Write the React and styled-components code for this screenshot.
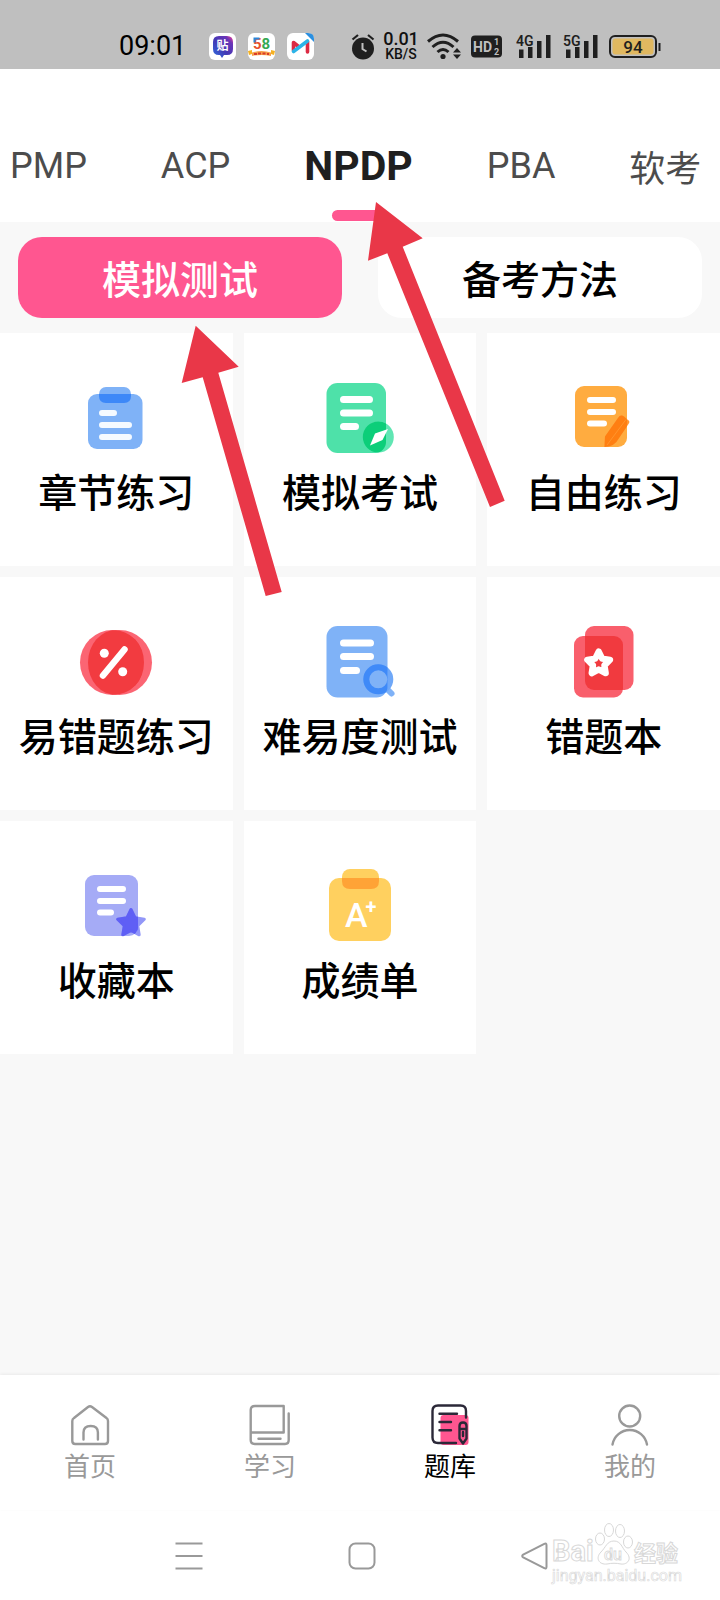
import React, { useState } from 'react';
import styled, { createGlobalStyle } from 'styled-components';

const COLORS = {
  main: '#ff5690',
  back: '#f8f8f8',
  white: '#ffffff',
  status: '#bfbfbf',
  ink: '#1f1f1f',
  font: '#4c4c4c',
  gray: '#999999',
  arrow: '#e93748',
};

const SUBJECTS = ['PMP', 'ACP', 'NPDP', 'PBA', '软考'];
const MODES = ['模拟测试', '备考方法'];

const App = () => {
  const [subject, setSubject] = useState('NPDP');
  const [mode, setMode] = useState('模拟测试');
  const [page, setPage] = useState('题库');

  return (
    <Container>
      <GlobalStyle />
      <StatusBar />
      <SubjectNav>
        {SUBJECTS.map((name) => (
          <SubjectTab key={name} $active={name === subject} onClick={() => setSubject(name)}>
            {name}
          </SubjectTab>
        ))}
      </SubjectNav>
      <Main>
        <ModeRow>
          {MODES.map((name) => (
            <ModeBtn key={name} $active={name === mode} onClick={() => setMode(name)}>
              {name}
            </ModeBtn>
          ))}
        </ModeRow>
        <MenuGrid>
          {MENUS.map(({ name, icon }) => (
            <MenuBtn key={name}>
              <MenuIcon viewBox="0 0 76 76" aria-hidden="true">
                {icon}
              </MenuIcon>
              <MenuName>{name}</MenuName>
            </MenuBtn>
          ))}
        </MenuGrid>
      </Main>
      <TabBar>
        {PAGES.map(({ name, icon }) => (
          <TabBtn key={name} $active={name === page} onClick={() => setPage(name)}>
            <TabIcon viewBox="0 0 42 42" aria-hidden="true">
              {icon}
            </TabIcon>
            {name}
          </TabBtn>
        ))}
      </TabBar>
      <SystemNav>
        <SystemBtn aria-label="菜单">
          <SystemIcon viewBox="0 0 28 28">
            <path d="M0.5 1.5h27M0.5 14h27M0.5 26.5h27" />
          </SystemIcon>
        </SystemBtn>
        <SystemBtn aria-label="主屏幕">
          <SystemIcon viewBox="0 0 28 28">
            <rect x="1.5" y="1.5" width="25" height="25" rx="6" />
          </SystemIcon>
        </SystemBtn>
        <SystemBtn aria-label="返回">
          <SystemIcon viewBox="0 0 28 28">
            <path d="M25.5 3.2v21.6q0 2.4-2.2 1.3L2.2 15.4q-2-1.4 0-2.8L23.3 1.9q2.2-1.1 2.2 1.3z" />
          </SystemIcon>
        </SystemBtn>
        <Watermark />
      </SystemNav>
      <Arrow $left={181} $top={325} width="102" height="272" viewBox="181 325 102 272">
        <path d="M195.7 325.7L238.7 366.7L218.3 372.7L281.7 592L265.7 596L202.7 377.3L181.7 383Z" />
      </Arrow>
      <Arrow $left={367} $top={201} width="139" height="307" viewBox="367 201 139 307">
        <path d="M376 202L422.7 238.3L402.7 246.7L504.7 500.7L490 507L387.3 253.3L368 260.7Z" />
      </Arrow>
    </Container>
  );
};
export default App;

const StatusBar = () => (
  <StatusRow>
    <Time>09:01</Time>
    <AppIcons>
      <svg width="27" height="27" viewBox="0 0 27 27">
        <defs>
          <linearGradient id="tie" x1="0" y1="1" x2="1" y2="0">
            <stop offset="0" stopColor="#2f6fe0" />
            <stop offset="0.45" stopColor="#4338b4" />
            <stop offset="0.8" stopColor="#6a35b8" />
            <stop offset="1" stopColor="#ff3f8e" />
          </linearGradient>
        </defs>
        <rect width="27" height="27" rx="6" fill="#fff" />
        <path d="M10 3h8q6 0 6 6v7q0 6-6 6h-3l-2 3l-2-3h-1q-6 0-6-6V9q0-6 6-6z" fill="url(#tie)" />
        <text x="13.5" y="17" fontSize="12" fontWeight="700" textAnchor="middle" fill="#fff">贴</text>
      </svg>
      <svg width="27" height="27" viewBox="0 0 27 27">
        <rect width="27" height="27" rx="6" fill="#fff" />
        <text x="5" y="16" fontSize="15" fontWeight="700" fill="#e8512c">
          5<tspan fill="#35a853">8</tspan>
        </text>
        <path d="M6.500 9.500V5.500h5" fill="none" stroke="#2b86d9" strokeWidth="2" />
        <path d="M0 18l4-1v4l-3 1zM27 18l-4-1v4l3 1z" fill="#f4b223" />
        <path d="M4 19.5q9.500-3 19 0v3.500q-9.500-2-19 0z" fill="#f6a04a" />
        <path d="M6 21h3M10 20.500h3M14.500 20.500h3M19 21h2" stroke="#d93a2b" strokeWidth="2" />
      </svg>
      <svg width="27" height="27" viewBox="0 0 27 27">
        <rect width="27" height="27" rx="6" fill="#fff" />
        <path d="M6.500 17.500V9.500l5 4M20.500 8.500V19" fill="none" stroke="#dc2a43" strokeWidth="3.600" strokeLinecap="round" strokeLinejoin="round" />
        <path d="M6.500 18.500L20.500 8" stroke="#2cb4e8" strokeWidth="3.600" strokeLinecap="round" />
        <path d="M18 0h3q6 0 6 6v3z" fill="#2a8fe0" />
      </svg>
    </AppIcons>
    <StatusIcons>
      <svg width="24" height="27" viewBox="0 0 24 27">
        <circle cx="12" cy="15.500" r="11" fill={COLORS.ink} />
        <path d="M1.500 6.500L7 2M22.500 6.500L17 2" stroke={COLORS.ink} strokeWidth="2.200" />
        <path d="M11.500 10v6l4 2.500" fill="none" stroke={COLORS.status} strokeWidth="2" />
      </svg>
      <Speed>
        <SpeedNum>0.01</SpeedNum>
        <SpeedUnit>KB/S</SpeedUnit>
      </Speed>
      <svg width="35" height="27" viewBox="0 0 35 27">
        <g fill="none" stroke={COLORS.ink} strokeWidth="3">
          <path d="M1 8.500Q16 -4.500 31 8.500" />
          <path d="M5.500 14Q16 4.500 26.500 14" />
          <path d="M10.500 19Q16 14 21.500 19" />
        </g>
        <circle cx="16" cy="23.500" r="2.600" fill={COLORS.ink} />
        <path d="M26 19.500l4-4.500l4 4.500zM26 21.500l4 4.500l4-4.500z" fill={COLORS.ink} />
      </svg>
      <svg width="31" height="23" viewBox="0 0 31 23">
        <rect width="31" height="22" y="0.500" rx="4" fill={COLORS.ink} />
        <g fill={COLORS.status} fontWeight="700">
          <text x="2" y="17" fontSize="14">HD</text>
          <text x="23" y="10" fontSize="9">1</text>
          <text x="23" y="20" fontSize="9">2</text>
        </g>
      </svg>
      <Signals>
        <Signal type="4G" />
        <Signal type="5G" />
      </Signals>
      <svg width="52" height="23" viewBox="0 0 52 23">
        <rect x="1" y="1" width="46" height="21" rx="5" fill="none" stroke={COLORS.ink} strokeWidth="2" />
        <rect x="3.500" y="3.500" width="41" height="16" rx="3" fill="#e0b860" />
        <path d="M50.500 8v8" stroke={COLORS.ink} strokeWidth="2" />
        <text x="24" y="17.500" fontSize="17" fontWeight="500" textAnchor="middle" fill={COLORS.ink}>94</text>
      </svg>
    </StatusIcons>
  </StatusRow>
);

const Signal = ({ type }) => (
  <svg width="36" height="25" viewBox="0 0 36 25">
    <text x="0" y="12" fontSize="14" fontWeight="600" fill={COLORS.ink}>{type}</text>
    <path d="M3 15.500h4.500V24H3zM12 13h4.500V24H12zM21 7h4.500V24H21zM30 1h4.500V24H30z" fill={COLORS.ink} />
  </svg>
);

const Watermark = () => (
  <WatermarkBox viewBox="0 0 132 66" aria-label="百度经验">
    <g fill="#fff" stroke="#d8d8d8" strokeWidth="1">
      <text x="2" y="40" fontSize="29" fontWeight="700">Bai</text>
      <ellipse cx="50" cy="18" rx="4.500" ry="6" />
      <ellipse cx="59" cy="9" rx="4.500" ry="6.500" />
      <ellipse cx="70" cy="10" rx="4.500" ry="6.500" />
      <ellipse cx="78" cy="21" rx="4.500" ry="6" />
      <path d="M64 20c7 0 8 7 12 11c7 7 1 13-5 12c-5-1-9-1-14 0c-8 1-12-6-6-12c5-5 6-11 13-11z" />
      <text x="54" y="39" fontSize="16" fontWeight="500" strokeWidth="0.8">du</text>
      <text x="84" y="40" fontSize="22" fontWeight="700">经验</text>
      <text x="2" y="60" fontSize="16" strokeWidth="0.6">jingyan.baidu.com</text>
    </g>
  </WatermarkBox>
);

const STAR = 'M0 -14L4.100 -5.700L13.300 -4.300L6.700 2.200L8.200 11.300L0 7L-8.200 11.300L-6.700 2.200L-13.300 -4.300L-4.100 -5.700Z';

const MENUS = [
  {
    name: '章节练习',
    icon: (
      <>
        <rect x="21" y="7" width="32" height="16" rx="7" fill="#7fb2f7" />
        <rect x="10" y="14" width="54.500" height="55" rx="9" fill="#7fb2f7" />
        <path d="M21 14h32v2q0 7-7 7H28q-7 0-7-7z" fill="#3d88f8" />
        <path d="M24 33h12M24 45h27M24 57h27" stroke="#f5faff" strokeWidth="6" strokeLinecap="round" />
      </>
    ),
  },
  {
    name: '模拟考试',
    icon: (
      <>
        <clipPath id="examBody">
          <rect x="4.500" y="3" width="59.500" height="70" rx="11" />
        </clipPath>
        <rect x="4.500" y="3" width="59.500" height="70" rx="11" fill="#4ee1a9" />
        <circle cx="56.300" cy="57" r="15.500" fill="#60e6b3" />
        <circle cx="56.300" cy="57" r="15.500" fill="#0cce79" clipPath="url(#examBody)" />
        <path d="M21.500 19.500h26M21.500 33h26M21.500 46.500h12" stroke="#fff" strokeWidth="7" strokeLinecap="round" />
        <path d="M66 49L53 53.500L48 65.500L60.500 60Z" fill="#fff" />
      </>
    ),
  },
  {
    name: '自由练习',
    icon: (
      <>
        <clipPath id="freeBody">
          <rect x="9" y="6" width="52" height="61" rx="9" />
        </clipPath>
        <rect x="9" y="6" width="52" height="61" rx="9" fill="#ffac40" />
        <path d="M38.500 67L39 56.500L52 38Q54.500 34 58 36.500L62 40Q64.500 41.500 62.500 44L52 59.500Q49 66 38.500 67Z" fill="#ff9836" />
        <path d="M38.500 67L39 56.500L52 38Q54.500 34 58 36.500L62 40Q64.500 41.500 62.500 44L52 59.500Q49 66 38.500 67Z" fill="#ff7f12" clipPath="url(#freeBody)" />
        <path d="M41 65L60 39.500" stroke="#ff952c" strokeWidth="1" />
        <path d="M24 20h23M24 32h23M24 43.500h14" stroke="#fff" strokeWidth="6" strokeLinecap="round" />
      </>
    ),
  },
  {
    name: '易错题练习',
    icon: (
      <>
        <clipPath id="leftDisc">
          <circle cx="34.500" cy="38.500" r="32.500" />
        </clipPath>
        <circle cx="34.500" cy="38.500" r="32.500" fill="#fb6573" />
        <circle cx="41.500" cy="38.500" r="32.500" fill="#fb6573" />
        <ellipse cx="38" cy="38.500" rx="28" ry="32.500" fill="#f23b40" clipPath="url(#leftDisc)" />
        <path d="M46.500 25.500L25 51.500" stroke="#fff" strokeWidth="6.500" strokeLinecap="round" />
        <circle cx="26.300" cy="29.300" r="4.500" fill="#fff" />
        <circle cx="44.700" cy="47.700" r="4.500" fill="#fff" />
      </>
    ),
  },
  {
    name: '难易度测试',
    icon: (
      <>
        <clipPath id="levelBody">
          <rect x="4.500" y="2" width="61" height="71.500" rx="11" />
        </clipPath>
        <rect x="4.500" y="2" width="61" height="71.500" rx="11" fill="#7fb2f7" />
        <path d="M66 66L69.500 69.500" stroke="#7fb2f7" strokeWidth="6" strokeLinecap="round" />
        <circle cx="56.300" cy="55.300" r="12" fill="none" stroke="#6fa8f8" strokeWidth="6" />
        <circle cx="56.300" cy="55.300" r="12" fill="#7fb2f7" stroke="#3f8af8" strokeWidth="6" clipPath="url(#levelBody)" />
        <path d="M21.500 19h27M21.500 32.500h27M21.500 46.500h13" stroke="#fff" strokeWidth="7" strokeLinecap="round" />
      </>
    ),
  },
  {
    name: '错题本',
    icon: (
      <>
        <clipPath id="frontCard">
          <rect x="8" y="12" width="49" height="61.500" rx="9" />
        </clipPath>
        <rect x="19" y="2" width="48.500" height="64" rx="9" fill="#f95f6c" />
        <rect x="8" y="12" width="49" height="61.500" rx="9" fill="#f95f6c" />
        <rect x="19" y="2" width="48.500" height="64" rx="9" fill="#f13a3f" clipPath="url(#frontCard)" />
        <path d={STAR} transform="translate(32.700 39.500) scale(0.850)" fill="none" stroke="#fff" strokeWidth="7.500" strokeLinejoin="round" />
      </>
    ),
  },
  {
    name: '收藏本',
    icon: (
      <>
        <clipPath id="favBody">
          <rect x="7" y="7" width="53" height="61" rx="9" />
        </clipPath>
        <rect x="7" y="7" width="53" height="61" rx="9" fill="#a5abf6" />
        <g transform="translate(53 55.500)" strokeWidth="3" strokeLinejoin="round">
          <path d={STAR} fill="#9297f8" stroke="#9297f8" />
        </g>
        <g clipPath="url(#favBody)">
          <path d={STAR} transform="translate(53 55.500)" fill="#5f5ff5" stroke="#5f5ff5" strokeWidth="3" strokeLinejoin="round" />
        </g>
        <path d="M22 21h23M22 33h23M22 44.500h11" stroke="#fff" strokeWidth="6" strokeLinecap="round" />
      </>
    ),
  },
  {
    name: '成绩单',
    icon: (
      <>
        <rect x="20" y="1" width="37" height="20" rx="8" fill="#ffd05f" />
        <rect x="7" y="10" width="62" height="63" rx="10" fill="#ffd05f" />
        <path d="M20 10h37v3q0 8-8 8H28q-8 0-8-8z" fill="#ffa336" />
        <text x="23" y="59" fontSize="34" fontWeight="500" fill="#fff">
          A<tspan dx="-2" dy="-13" fontSize="20" fontWeight="700">+</tspan>
        </text>
      </>
    ),
  },
];

const PAGES = [
  {
    name: '首页',
    icon: (
      <>
        <path d="M3.300 17q0-2 1.700-3L19 3q2-1.500 4 0l14.500 11q1.500 1 1.500 3v20q0 3-3 3H6.300q-3 0-3-3z" />
        <path d="M14.500 35.500V28.500q0-6.500 7.200-6.500t7.200 6.500v7" />
      </>
    ),
  },
  {
    name: '学习',
    icon: (
      <>
        <path d="M34.700 28.500V2H6q-4.300 0-4.300 4v30q0 4 4 4H36q3.700 0 3.700-4V9.500M34.700 28.500H1.700" />
        <path d="M9.500 34.700H31.500" />
      </>
    ),
  },
  {
    name: '题库',
    icon: (
      <>
        <rect x="11.500" y="11" width="28" height="30" rx="3" fill={COLORS.main} stroke="none" />
        <path d="M37 13.500V7q0-5.500-5.500-5.500H9q-5.500 0-5.500 5.500v26.500q0 5.500 5.500 5.500h18" />
        <path d="M10.500 9.700H28M10.500 18H22M10.500 26.300H22" />
        <path d="M30.500 22q0-3.500 3.500-3.500t3.500 3.500v12.500L34 39.500L30.500 34.500zM30.500 25h7M34 28v4" />
      </>
    ),
  },
  {
    name: '我的',
    icon: (
      <>
        <circle cx="20.700" cy="12" r="10.500" />
        <path d="M3.500 40.500A17.500 17.500 0 0 1 38 40.500" />
      </>
    ),
  },
];

const GlobalStyle = createGlobalStyle`
  * {
    box-sizing: border-box;
  }
  body {
    margin: 0;
    font-family: Roboto, 'Noto Sans CJK SC', sans-serif;
  }
  button {
    padding: 0;
    border: none;
    background: none;
    font-family: inherit;
    cursor: pointer;
  }
  svg {
    display: block;
  }
`;

const Container = styled.div`
  position: relative;
  display: flex;
  flex-direction: column;
  min-height: 100vh;
  overflow: hidden;
  background-color: ${COLORS.white};
`;

const StatusRow = styled.header`
  display: flex;
  align-items: center;
  height: 69px;
  padding: 23px 0 0 119px;
  background-color: ${COLORS.status};
`;
const Time = styled.span`
  width: 66px;
  font-size: 27px;
  color: #000;
`;
const AppIcons = styled.div`
  display: flex;
  gap: 12px;
  margin-left: 24px;
`;
const StatusIcons = styled.div`
  display: flex;
  align-items: center;
  gap: 9px;
  margin-left: 37px;
`;
const Speed = styled.div`
  display: flex;
  flex-direction: column;
  align-items: center;
  width: 34px;
  color: #111;
`;
const SpeedNum = styled.span`
  font-size: 18px;
  line-height: 16px;
  font-weight: 500;
`;
const SpeedUnit = styled.span`
  font-size: 14px;
  line-height: 14px;
  font-weight: 500;
`;
const Signals = styled.div`
  display: flex;
  gap: 11px;
  padding: 0 1px 0 5px;
`;

const SubjectNav = styled.nav`
  display: flex;
  gap: 74px;
  padding: 67px 0 0 10px;
`;
const SubjectTab = styled.button`
  position: relative;
  flex-shrink: 0;
  height: 86px;
  padding-bottom: 26px;
  color: ${({ $active }) => ($active ? COLORS.ink : COLORS.font)};
  font-size: ${({ $active }) => ($active ? 41 : 36)}px;
  font-weight: ${({ $active }) => ($active ? 700 : 400)};

  &::after {
    content: '';
    display: ${({ $active }) => ($active ? 'block' : 'none')};
    position: absolute;
    left: calc(50% - 27px);
    bottom: 1px;
    width: 54px;
    height: 11px;
    border-radius: 6px;
    background-color: ${COLORS.main};
  }
`;

const Main = styled.main`
  flex: 1;
  background-color: ${COLORS.back};
`;
const ModeRow = styled.div`
  display: flex;
  gap: 36px;
  padding: 15px 18px;
`;
const ModeBtn = styled.button`
  flex: 1;
  height: 81px;
  padding-bottom: 2px;
  border-radius: 24px;
  background-color: ${({ $active }) => ($active ? COLORS.main : COLORS.white)};
  color: ${({ $active }) => ($active ? COLORS.white : '#000')};
  font-size: 39px;
  font-weight: 500;
`;

const MenuGrid = styled.div`
  display: grid;
  grid-template-columns: repeat(3, 1fr);
  gap: 11px;
`;
const MenuBtn = styled.button`
  display: flex;
  flex-direction: column;
  align-items: center;
  gap: 14px;
  height: 233px;
  padding-top: 47px;
  background-color: ${COLORS.white};
`;
const MenuIcon = styled.svg`
  width: 76px;
  height: 76px;
`;
const MenuName = styled.span`
  color: #000;
  font-size: 39px;
  line-height: 48px;
  font-weight: 500;
  white-space: nowrap;
`;

const TabBar = styled.nav`
  display: grid;
  grid-template-columns: repeat(4, 1fr);
  padding: 29px 0 27px;
  background-color: ${COLORS.white};
  box-shadow: 0 -1px 3px rgba(0, 0, 0, 0.06);
`;
const TabBtn = styled.button`
  display: flex;
  flex-direction: column;
  align-items: center;
  gap: 5px;
  color: ${({ $active }) => ($active ? '#000' : COLORS.gray)};
  font-size: 26px;
  line-height: 32px;

  svg {
    stroke: ${({ $active }) => ($active ? '#2b2838' : COLORS.gray)};
  }
`;
const TabIcon = styled.svg`
  width: 42px;
  height: 42px;
  fill: none;
  stroke-width: 2.4px;
  stroke-linecap: round;
  stroke-linejoin: round;
`;

const SystemNav = styled.footer`
  position: relative;
  display: grid;
  grid-template-columns: repeat(3, 1fr);
  align-items: center;
  height: 90px;
  padding: 2px 98px 0 102px;
`;
const SystemBtn = styled.button`
  display: flex;
  justify-content: center;
`;
const SystemIcon = styled.svg`
  width: 28px;
  height: 28px;
  fill: none;
  stroke: ${COLORS.gray};
  stroke-width: 2px;
`;
const WatermarkBox = styled.svg`
  position: absolute;
  right: 38px;
  top: 11px;
  width: 132px;
  height: 66px;
`;

const Arrow = styled.svg`
  position: absolute;
  left: ${({ $left }) => $left}px;
  top: ${({ $top }) => $top}px;
  fill: ${COLORS.arrow};
  pointer-events: none;
`;
